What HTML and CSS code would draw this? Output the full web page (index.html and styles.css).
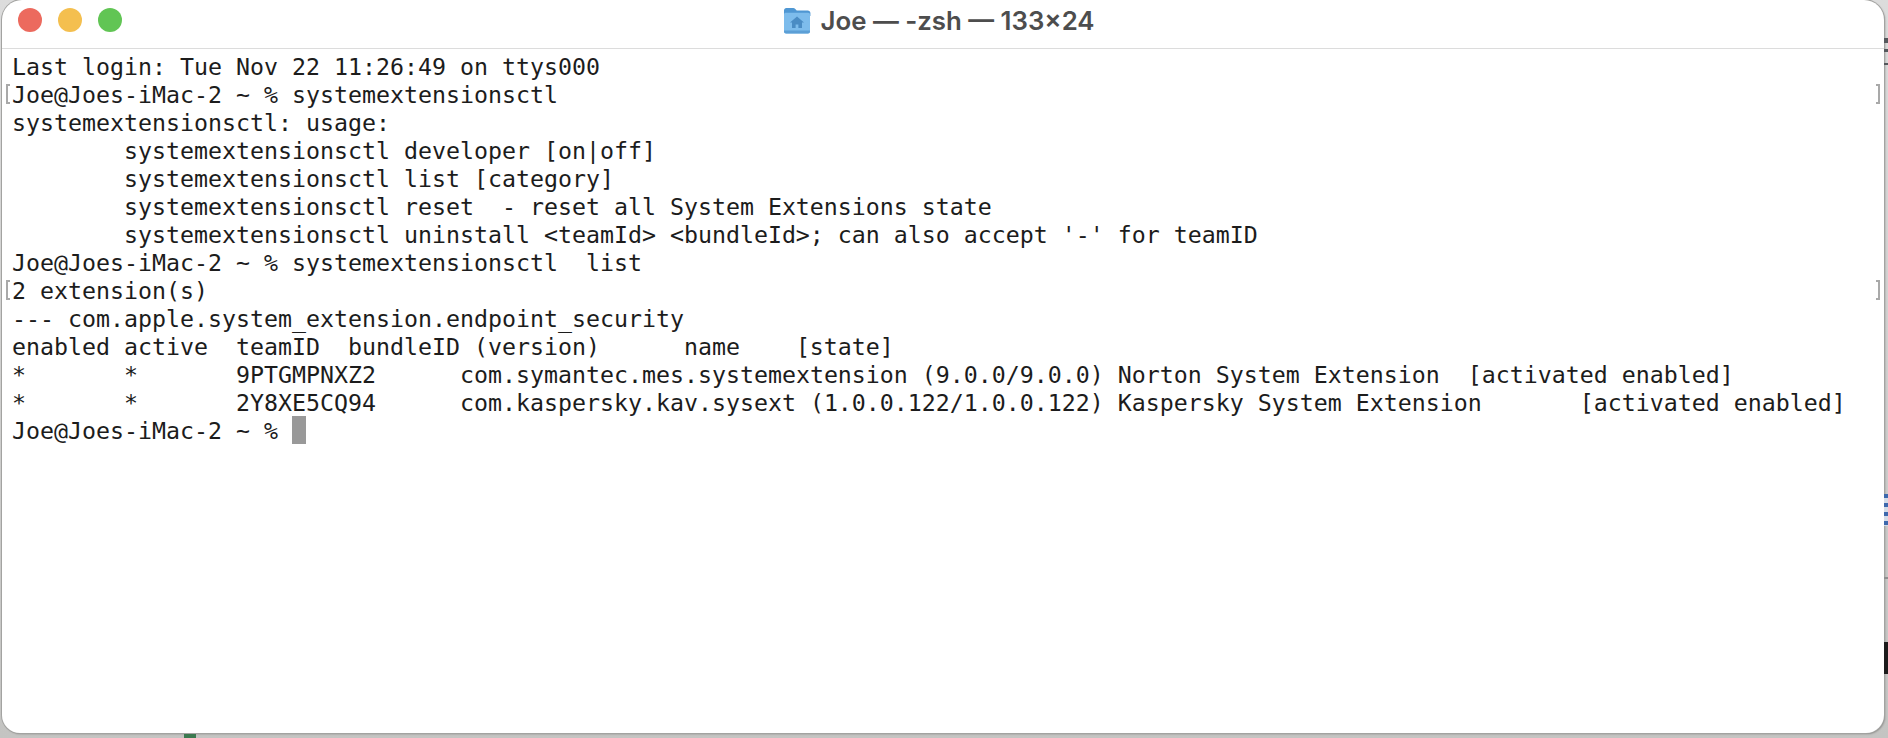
FILE: index.html
```html
<!DOCTYPE html>
<html lang="en">
<head>
<meta charset="utf-8">
<title>Joe — -zsh — 133×24</title>
<link rel="stylesheet" href="styles.css">
</head>
<body>
<div class="desk">
  <span class="bit bit-a"></span>
  <span class="bit bit-b"></span>
  <span class="bit bit-c"></span>
  <span class="bit bit-d"></span>
  <span class="bit bit-e"></span>
  <span class="bit bit-f"></span>
  <main class="window">
    <header class="titlebar">
      <div class="lights">
        <span class="light red"></span>
        <span class="light yellow"></span>
        <span class="light green"></span>
      </div>
      <div class="title">
        <svg class="folder" viewBox="0 0 28 28" width="28" height="28" aria-hidden="true">
          <path d="M1 4.500C1 3.100 2 2 3.400 2h6.800c.9 0 1.500.3 2.100 1l1.400 1.600h11c1.500 0 2.700 1 2.700 2.500V10H1z" fill="#4f97d3"/>
          <path d="M1 8.400C1 7.400 1.800 6.800 2.800 6.800h22.400c1 0 1.800.7 1.800 1.700v17c0 1.200-.9 2-2 2H3c-1.100 0-2-.8-2-2z" fill="#7dbcec"/>
          <path d="M1 24.500h26v1c0 1.200-.9 2-2 2H3c-1.100 0-2-.8-2-2z" fill="#5c9fd6"/>
          <path d="M14 10.500l-7 6h2v5.500h3.600v-3.500h2.800V22H19v-5.500h2z" fill="#4a8cc4"/>
        </svg>
        <span class="title-text">Joe — -zsh — 133×24</span>
      </div>
    </header>
    <div class="screen">
      <div class="line">Last login: Tue Nov 22 11:26:49 on ttys000</div>
      <div class="line mark">Joe@Joes-iMac-2 ~ % systemextensionsctl</div>
      <div class="line">systemextensionsctl: usage:</div>
      <div class="line">	systemextensionsctl developer [on|off]</div>
      <div class="line">	systemextensionsctl list [category]</div>
      <div class="line">	systemextensionsctl reset  - reset all System Extensions state</div>
      <div class="line">	systemextensionsctl uninstall &lt;teamId&gt; &lt;bundleId&gt;; can also accept '-' for teamID</div>
      <div class="line">Joe@Joes-iMac-2 ~ % systemextensionsctl  list</div>
      <div class="line mark">2 extension(s)</div>
      <div class="line">--- com.apple.system_extension.endpoint_security</div>
      <div class="line">enabled	active	teamID	bundleID (version)	name	[state]</div>
      <div class="line">*	*	9PTGMPNXZ2	com.symantec.mes.systemextension (9.0.0/9.0.0) Norton System Extension  [activated enabled]</div>
      <div class="line">*	*	2Y8XE5CQ94	com.kaspersky.kav.sysext (1.0.0.122/1.0.0.122) Kaspersky System Extension       [activated enabled]</div>
      <div class="line">Joe@Joes-iMac-2 ~ % <span class="cursor"></span></div>
    </div>
  </main>
</div>
</body>
</html>
```

FILE: styles.css
```css
html, body {
  margin: 0;
  height: 100%;
  overflow: hidden;
}

.desk {
  position: relative;
  height: 738px;
  box-sizing: border-box;
  padding: 0 4px 5px 2px;
  background: linear-gradient(#dcdcdc, #c4c4c2);
}

.bit {
  position: absolute;
  left: 1884px;
  width: 4px;
}
.bit-a { top: 38px; height: 5px; background: #55585c; }
.bit-b { top: 49px; height: 3px; background: #55585c; }
.bit-c { top: 63px; height: 2px; background: #55585c; }
.bit-d {
  top: 494px;
  height: 32px;
  background: repeating-linear-gradient(#3d69ad 0 4px, #d5dce8 4px 9px);
}
.bit-e { top: 577px; height: 2px; background: #8f8f8f; }
.bit-f { top: 642px; height: 32px; background: #1c1c1c; }

.desk::after {
  content: "";
  position: absolute;
  left: 184px;
  top: 734px;
  width: 12px;
  height: 4px;
  background: #3c7a50;
}

.window {
  height: 100%;
  box-sizing: border-box;
  background: #fff;
  border-radius: 20px 20px 18px 18px;
  box-shadow: 0 0 0 1px #a3a3a1, 1px 1px 2px #858583;
  overflow: hidden;
}

.titlebar {
  position: relative;
  display: flex;
  justify-content: center;
  align-items: center;
  height: 48px;
  border-bottom: 1px solid #dcdcdc;
}

.lights {
  position: absolute;
  left: 16px;
  top: 8px;
  display: flex;
  gap: 16px;
}

.light {
  width: 24px;
  height: 24px;
  border-radius: 50%;
}
.red { background: #ec6a5e; }
.yellow { background: #f4bf4f; }
.green { background: #61c554; }

.title {
  display: flex;
  align-items: center;
  gap: 9px;
  height: 40px;
  margin: 0 8px 8px 0;
}

.folder { display: block; }

.title-text {
  font-family: Inter, "Liberation Sans", sans-serif;
  font-size: 25.8px;
  font-weight: 600;
  color: #4d4d4d;
  white-space: nowrap;
}

.screen {
  padding: 4px 0 0 10px;
  font-family: "DejaVu Sans Mono", "Liberation Mono", monospace;
  font-size: 23.25px;
  line-height: 28px;
  tab-size: 8;
  color: #1c1c1c;
}

.line {
  position: relative;
  height: 28px;
  white-space: pre;
}

.mark::before,
.mark::after {
  content: "";
  position: absolute;
  top: 3px;
  width: 4px;
  height: 20px;
  border: 2px solid #a9a9a9;
  box-sizing: border-box;
}
.mark::before {
  left: -6px;
  border-right: 0;
}
.mark::after {
  left: 1864px;
  border-left: 0;
}

.cursor {
  display: inline-block;
  width: 14px;
  height: 28px;
  margin-top: -1px;
  background: #999;
  vertical-align: top;
}
```
